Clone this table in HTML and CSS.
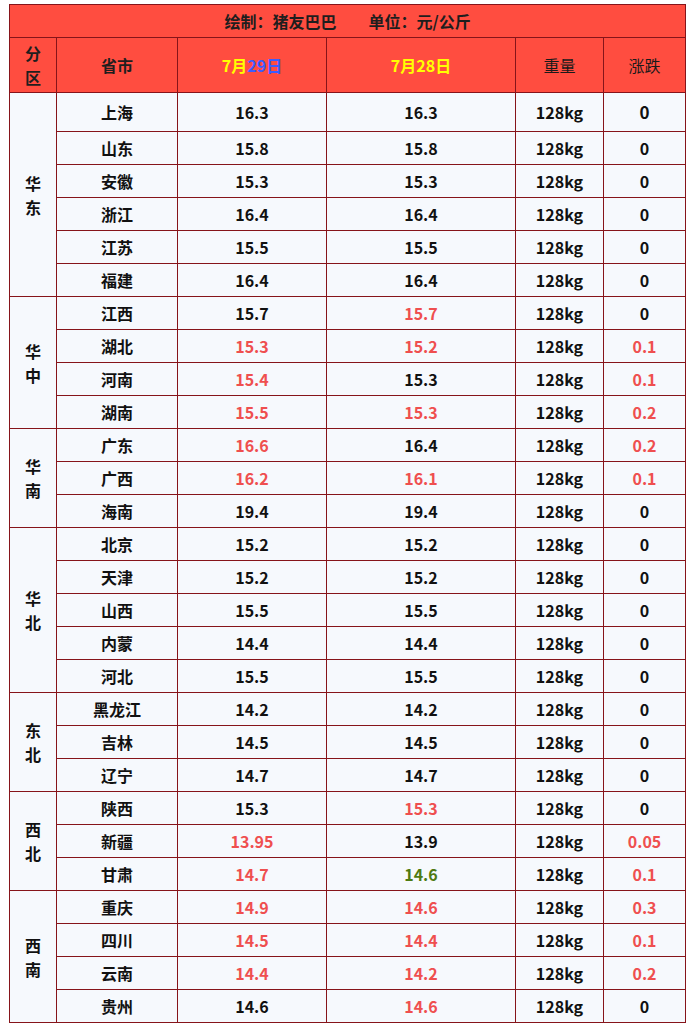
FILE: index.html
```html
<!DOCTYPE html>
<html lang="zh">
<head>
<meta charset="utf-8">
<link rel="stylesheet" href="styles.css">
</head>
<body>
<table class="price">
  <colgroup>
    <col class="c-region"><col class="c-prov"><col class="c-d1"><col class="c-d2"><col class="c-w"><col class="c-ch">
  </colgroup>
  <thead>
    <tr class="title-row"><th colspan="6">绘制：猪友巴巴　　单位：元/公斤</th></tr>
    <tr class="head-row">
      <th class="vert">分<br>区</th>
      <th>省市</th>
      <th class="date"><span class="y">7月</span><span class="b">29日</span></th>
      <th class="date"><span class="y">7月28日</span></th>
      <th class="thin">重量</th>
      <th class="thin">涨跌</th>
    </tr>
  </thead>
  <tbody>
    <tr class="first"><td class="vert" rowspan="6">华<br>东</td><td>上海</td><td>16.3</td><td>16.3</td><td>128kg</td><td class="big">0</td></tr>
    <tr><td>山东</td><td>15.8</td><td>15.8</td><td>128kg</td><td>0</td></tr>
    <tr><td>安徽</td><td>15.3</td><td>15.3</td><td>128kg</td><td>0</td></tr>
    <tr><td>浙江</td><td>16.4</td><td>16.4</td><td>128kg</td><td>0</td></tr>
    <tr><td>江苏</td><td>15.5</td><td>15.5</td><td>128kg</td><td>0</td></tr>
    <tr><td>福建</td><td>16.4</td><td>16.4</td><td>128kg</td><td>0</td></tr>

    <tr><td class="vert" rowspan="4">华<br>中</td><td>江西</td><td>15.7</td><td class="r">15.7</td><td>128kg</td><td>0</td></tr>
    <tr><td>湖北</td><td class="r">15.3</td><td class="r">15.2</td><td>128kg</td><td class="r">0.1</td></tr>
    <tr><td>河南</td><td class="r">15.4</td><td>15.3</td><td>128kg</td><td class="r">0.1</td></tr>
    <tr><td>湖南</td><td class="r">15.5</td><td class="r">15.3</td><td>128kg</td><td class="r">0.2</td></tr>

    <tr><td class="vert" rowspan="3">华<br>南</td><td>广东</td><td class="r">16.6</td><td>16.4</td><td>128kg</td><td class="r">0.2</td></tr>
    <tr><td>广西</td><td class="r">16.2</td><td class="r">16.1</td><td>128kg</td><td class="r">0.1</td></tr>
    <tr><td>海南</td><td>19.4</td><td>19.4</td><td>128kg</td><td>0</td></tr>

    <tr><td class="vert" rowspan="5">华<br>北</td><td>北京</td><td>15.2</td><td>15.2</td><td>128kg</td><td>0</td></tr>
    <tr><td>天津</td><td>15.2</td><td>15.2</td><td>128kg</td><td>0</td></tr>
    <tr><td>山西</td><td>15.5</td><td>15.5</td><td>128kg</td><td>0</td></tr>
    <tr><td>内蒙</td><td>14.4</td><td>14.4</td><td>128kg</td><td>0</td></tr>
    <tr><td>河北</td><td>15.5</td><td>15.5</td><td>128kg</td><td>0</td></tr>

    <tr><td class="vert" rowspan="3">东<br>北</td><td>黑龙江</td><td>14.2</td><td>14.2</td><td>128kg</td><td>0</td></tr>
    <tr><td>吉林</td><td>14.5</td><td>14.5</td><td>128kg</td><td>0</td></tr>
    <tr><td>辽宁</td><td>14.7</td><td>14.7</td><td>128kg</td><td>0</td></tr>

    <tr><td class="vert" rowspan="3">西<br>北</td><td>陕西</td><td>15.3</td><td class="r">15.3</td><td>128kg</td><td>0</td></tr>
    <tr><td>新疆</td><td class="r">13.95</td><td>13.9</td><td>128kg</td><td class="r">0.05</td></tr>
    <tr><td>甘肃</td><td class="r">14.7</td><td class="g">14.6</td><td>128kg</td><td class="r">0.1</td></tr>

    <tr><td class="vert" rowspan="4">西<br>南</td><td>重庆</td><td class="r">14.9</td><td class="r">14.6</td><td>128kg</td><td class="r">0.3</td></tr>
    <tr><td>四川</td><td class="r">14.5</td><td class="r">14.4</td><td>128kg</td><td class="r">0.1</td></tr>
    <tr><td>云南</td><td class="r">14.4</td><td class="r">14.2</td><td>128kg</td><td class="r">0.2</td></tr>
    <tr><td>贵州</td><td>14.6</td><td class="r">14.6</td><td>128kg</td><td>0</td></tr>
  </tbody>
</table>
</body>
</html>
```
FILE: styles.css
```css
html, body {
  margin: 0;
  padding: 0;
  background: #ffffff;
}
body {
  padding: 4px 0 0 9px;
  font-family: "Noto Sans CJK SC", "Noto Sans", sans-serif;
}
.price {
  border-collapse: collapse;
  table-layout: fixed;
  width: 676px;
  font-size: 16px;
  font-weight: bold;
  color: #111;
}
.c-region { width: 47px; }
.c-prov { width: 121px; }
.c-d1 { width: 149px; }
.c-d2 { width: 189px; }
.c-w { width: 88px; }
.c-ch { width: 82px; }

.price th, .price td {
  border: 1px solid #86141a;
  padding: 0;
  text-align: center;
  vertical-align: middle;
  line-height: 24px;
}
.price thead th {
  background: #ff4d40;
  color: #1e1e1e;
}
.title-row th {
  height: 32px;
  color: #2a2a2a;
}
.head-row th {
  height: 54px;
}
.head-row th.thin {
  font-weight: normal;
  color: #1a1a1a;
}
.vert {
  line-height: 24px;
}
.date .y { color: #ffff00; }
.date .b { color: #3d5cff; }

.price td {
  background: #f6f9fd;
  height: 32px;
}
.price tr.first td {
  height: 38px;
}
.price td.vert {
  background: #f6f9fd;
}
.price td.r { color: #ef4f4f; }
.price td.g { color: #4e7a12; }
.price td.big { font-size: 17px; }
```
